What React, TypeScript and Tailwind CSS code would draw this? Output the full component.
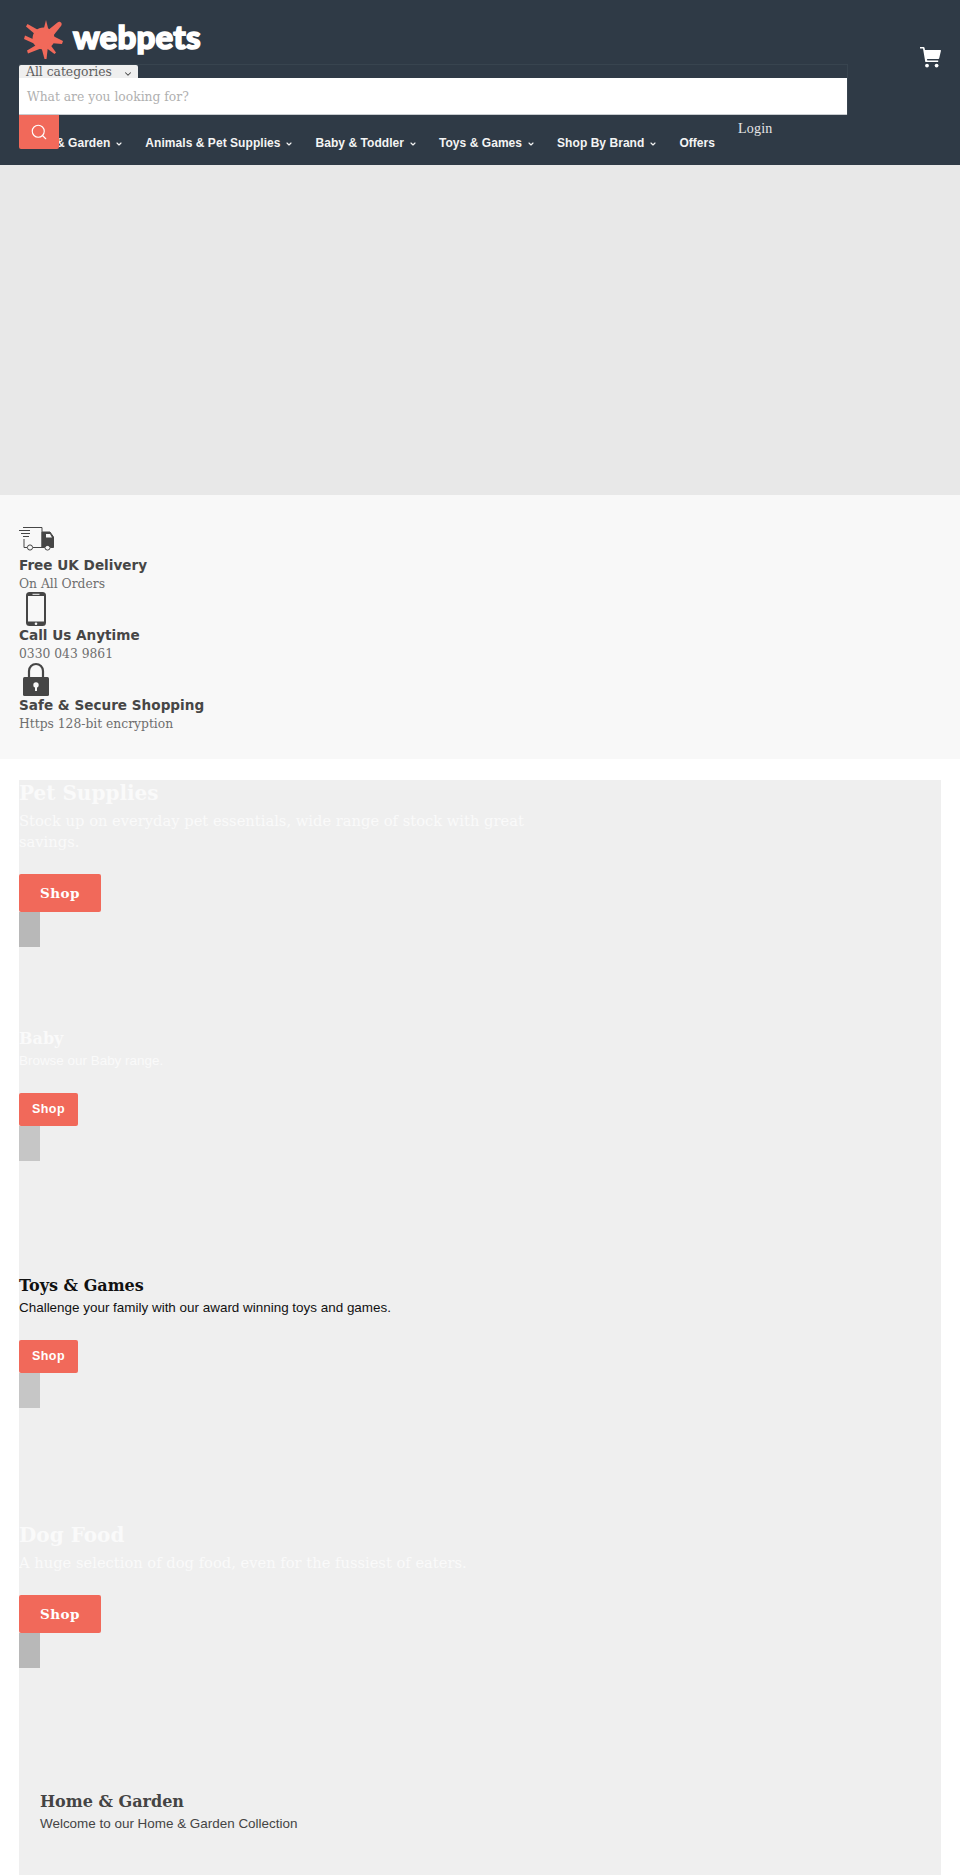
import type { ReactNode } from "react";
import { ChevronDown, Search } from "lucide-react";

const navLinks = [
  { label: "Home & Garden", caret: true },
  { label: "Animals & Pet Supplies", caret: true },
  { label: "Baby & Toddler", caret: true },
  { label: "Toys & Games", caret: true },
  { label: "Shop By Brand", caret: true },
  { label: "Offers", caret: false },
];

function Logo() {
  return (
    <svg width="39" height="39" viewBox="0 0 39 39" fill="#f1695a">
      <circle cx="19.500" cy="18.500" r="11" />
      <path d="M19.500 10 L22 0 L24.500 10 Z" />
      <path d="M23 11 L33.500 2.500 C36 0.500 39 3.500 37 6 L29 16 Z" />
      <path d="M27 15 L39 21 L38 24 L26 23 Z" />
      <path d="M25 23 L32 32.500 L30.500 34 L21 27 Z" />
      <path d="M17 26 L20.500 39 L22.500 39 L24 26 Z" />
      <path d="M14 24 L3 30.500 L4 33.500 L18 28 Z" />
      <path d="M11 20 L1 15.500 L0 19 L11 24 Z" />
      <path d="M12 15 L2 6.500 L3.500 4 L16 11 Z" />
    </svg>
  );
}

function CartIcon() {
  return (
    <svg width="21" height="21" viewBox="0 0 21 21" fill="#fff">
      <path d="M0 0h3.600c.5 0 .8.3.9.7L5 3h15.200c.5 0 .8.4.7.9l-1.700 7.400c-.1.4-.4.7-.8.7H7l.3 1.500h10.900v1.600H6c-.4 0-.7-.3-.8-.7L3 1.600H0z" />
      <circle cx="7" cy="18.600" r="1.900" />
      <circle cx="16.600" cy="18.600" r="1.900" />
    </svg>
  );
}

function TruckIcon() {
  return (
    <svg width="35" height="24" viewBox="0 0 35 24" fill="none" stroke="#464646" strokeWidth="1">
      <path d="M0 3.500h11M2 6.500h9M4 9.500h6" />
      <path d="M4 0.500h19v20h-9M5 12v8.500h3" strokeLinejoin="round" />
      <circle cx="11" cy="20.500" r="2.600" />
      <circle cx="28.500" cy="20.500" r="2.600" />
      <path d="M23 5h8l3.500 5v10.500h-3a3.200 3.200 0 0 0-6 0h-2.500z" fill="#464646" />
      <path d="M27 7h4l2 3.500h-6z" fill="#f8f8f8" stroke="none" />
    </svg>
  );
}

function PhoneIcon() {
  return (
    <svg width="20" height="34" viewBox="0 0 20 34">
      <rect x="0" y="0" width="20" height="34" rx="3.500" fill="#464646" />
      <rect x="2" y="4" width="16" height="25.500" fill="#f8f8f8" />
      <rect x="6.500" y="1.800" width="7" height="1" fill="#f8f8f8" />
      <circle cx="10" cy="31.700" r="1.300" fill="#f8f8f8" />
    </svg>
  );
}

function LockIcon() {
  return (
    <svg width="26" height="34" viewBox="0 0 26 34">
      <path d="M6 15V9a7 7 0 0 1 14 0V15" fill="none" stroke="#464646" strokeWidth="2.200" />
      <rect x="0" y="15" width="26" height="19" rx="1.500" fill="#464646" />
      <circle cx="13" cy="23" r="2.700" fill="#f8f8f8" />
      <rect x="12" y="24" width="2" height="5" fill="#f8f8f8" />
    </svg>
  );
}

function Feature({ icon, title, text }: { icon: ReactNode; title: string; text: string }) {
  return (
    <div>
      <div className="flex h-[34px] items-center">{icon}</div>
      <div className="font-['DejaVu_Sans',sans-serif] text-[13.600px] leading-[19px] font-bold text-[#464646]">{title}</div>
      <div className="font-['DejaVu_Serif',serif] text-[13.700px] leading-[17px] text-[#6e6e6e] [font-stretch:condensed]">{text}</div>
    </div>
  );
}

function Promo({
  title,
  text,
  big,
  color,
  bar,
  height,
  indent,
}: {
  title: string;
  text: string;
  big?: boolean;
  color: string;
  bar?: string;
  height: number;
  indent?: boolean;
}) {
  return (
    <div style={{ height, color }} className={indent ? "pl-[21px]" : ""}>
      <h2
        className={
          big
            ? "font-['DejaVu_Serif',serif] text-[20px] leading-[26px] font-bold"
            : "font-['DejaVu_Serif',serif] text-[16px] leading-[23px] font-bold"
        }
      >
        {title}
      </h2>
      <p
        className={
          big
            ? "mt-[4px] max-w-[540px] font-['DejaVu_Serif',serif] text-[14.700px] leading-[21px]"
            : "max-w-[540px] font-['Liberation_Sans',sans-serif] text-[13.450px] leading-[21px]"
        }
      >
        {text}
      </p>
      {bar && (
        <>
          {big ? (
            <button className="mt-[22px] block h-[38px] w-[82px] rounded-[2px] bg-[#f1695a] font-['DejaVu_Serif',serif] text-[13.500px] font-bold tracking-[0.5px] text-white">
              Shop
            </button>
          ) : (
            <button className="mt-[22px] block h-[33px] w-[59px] rounded-[2px] bg-[#f1695a] font-['Liberation_Sans',sans-serif] text-[12.500px] font-bold tracking-[0.5px] text-white">
              Shop
            </button>
          )}
          <div style={{ backgroundColor: bar }} className="h-[35px] w-[21px]" />
        </>
      )}
    </div>
  );
}

export default function App() {
  return (
    <div className="h-[1875px] overflow-hidden bg-white font-['DejaVu_Serif',serif]">
      <header className="relative h-[165px] bg-[#2f3a46] px-[19px]">
        <div className="flex h-[64px] items-start pt-[20px] pl-[5px]">
          <Logo />
          <span className="mt-[-2px] ml-[10px] font-['Lato',sans-serif] text-[33px] leading-[36px] font-black tracking-[0.2px] text-white [-webkit-text-stroke:1.600px_white]">webpets</span>
        </div>
        <div className="w-[829px] border-t border-r border-[#38444f]">
          <div className="flex h-[13px] w-[119px] items-center rounded-t-[2px] bg-[#efefef] pl-[7px] text-[13.700px] leading-[13px] text-[#5e5e5e] [font-stretch:condensed]">
            All categories
            <ChevronDown className="mt-[5px] ml-[11px] h-[10px] w-[10px] text-[#464646]" strokeWidth={2.500} />
          </div>
          <div className="flex h-[37px] items-center border-b border-[#c8ccd0] bg-white pl-[8px] text-[13.700px] text-[#b0b0b0] [font-stretch:condensed]">
            What are you looking for?
          </div>
        </div>
        <button className="absolute top-[115px] left-[19px] z-10 flex h-[34px] w-[40px] items-center justify-center rounded-b-[2px] bg-[#f1695a]">
          <Search className="h-[18px] w-[18px] text-white" strokeWidth={1.500} />
        </button>
        <a className="absolute top-[120px] left-[738px] font-['Liberation_Serif',serif] text-[14px] leading-[18px] tracking-[0.2px] text-[#e6e6e6]">Login</a>
        <div className="absolute top-[47px] left-[920px]">
          <CartIcon />
        </div>
        <nav className="mt-[14px] flex h-[28px] items-center gap-[22px] font-['Liberation_Sans',sans-serif] text-[12px] font-bold tracking-[0.05px] text-[#f4f4f4]">
          {navLinks.map((link) => (
            <a key={link.label} className="flex items-center whitespace-nowrap">
              {link.label}
              {link.caret && <ChevronDown className="mt-[2px] ml-[5px] h-[8px] w-[8px]" strokeWidth={3.500} />}
            </a>
          ))}
        </nav>
      </header>

      <div className="h-[330px] bg-[#e8e8e8]" />

      <section className="h-[264px] bg-[#f8f8f8] px-[19px] pt-[27px]">
        <Feature icon={<TruckIcon />} title="Free UK Delivery" text="On All Orders" />
        <Feature icon={<div className="pl-[7px]"><PhoneIcon /></div>} title="Call Us Anytime" text="0330 043 9861" />
        <Feature icon={<div className="pl-[4px]"><LockIcon /></div>} title="Safe & Secure Shopping" text="Https 128-bit encryption" />
      </section>

      <main className="mx-[19px] mt-[21px] h-[1200px] bg-[#efefef]">
        <Promo big title="Pet Supplies" text="Stock up on everyday pet essentials, wide range of stock with great savings." color="#fafafa" bar="#b8b8b8" height={247} />
        <Promo title="Baby" text="Browse our Baby range." color="#fafafa" bar="#c6c6c6" height={247} />
        <Promo title="Toys & Games" text="Challenge your family with our award winning toys and games." color="#111111" bar="#c6c6c6" height={248} />
        <Promo big title="Dog Food" text="A huge selection of dog food, even for the fussiest of eaters." color="#fafafa" bar="#b8b8b8" height={268} />
        <Promo indent title="Home & Garden" text="Welcome to our Home & Garden Collection" color="#444444" height={120} />
      </main>
    </div>
  );
}
